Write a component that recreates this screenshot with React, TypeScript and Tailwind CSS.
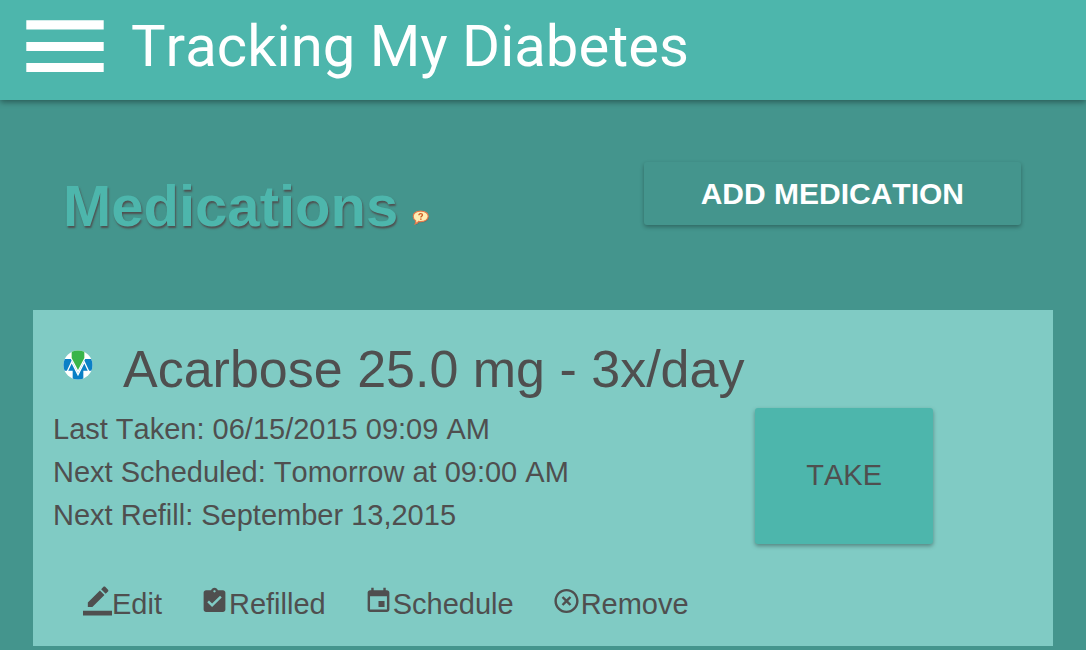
import React from 'react';

interface Medication {
    name: string;
    lastTaken: string;
    nextScheduled: string;
    nextRefill: string;
}

const MEDICATIONS: Medication[] = [
    {
        name: 'Acarbose 25.0 mg - 3x/day',
        lastTaken: '06/15/2015 09:09 AM',
        nextScheduled: 'Tomorrow at 09:00 AM',
        nextRefill: 'September 13,2015',
    },
];

const ACTIONS = [
    {
        label: 'Edit',
        path: 'M17.75 7L14 3.25l-10 10V17h3.75l10-10zm2.96-2.96c.39-.39.39-1.02 0-1.41L18.37.29c-.39-.39-1.02-.39-1.41 0L15 2.25 18.75 6l1.96-1.96zM0 20h24v4H0z',
    },
    {
        label: 'Refilled',
        path: 'M19 3h-4.18C14.4 1.84 13.3 1 12 1c-1.3 0-2.4.84-2.82 2H5c-1.1 0-2 .9-2 2v14c0 1.1.9 2 2 2h14c1.1 0 2-.9 2-2V5c0-1.1-.9-2-2-2zm-7 0c.55 0 1 .45 1 1s-.45 1-1 1-1-.45-1-1 .45-1 1-1zm-2 14l-4-4 1.41-1.41L10 14.17l6.59-6.59L18 9l-8 8z',
    },
    {
        label: 'Schedule',
        path: 'M17 12h-5v5h5v-5zM16 1v2H8V1H6v2H5c-1.11 0-1.99.9-1.99 2L3 19c0 1.1.89 2 2 2h14c1.1 0 2-.9 2-2V5c0-1.1-.9-2-2-2h-1V1h-2zm3 18H5V8h14v11z',
    },
    {
        label: 'Remove',
        path: 'M14.59 8L12 10.59 9.41 8 8 9.41 10.59 12 8 14.59 9.41 16 12 13.41 14.59 16 16 14.59 13.41 12 16 9.41 14.59 8zM12 2C6.47 2 2 6.47 2 12s4.47 10 10 10 10-4.47 10-10S17.53 2 12 2zm0 18c-4.41 0-8-3.59-8-8s3.59-8 8-8 8 3.59 8 8-3.59 8-8 8z',
    },
];

const MenuIcon = () => (
    <svg width={78} height={52} viewBox="0 0 78 52" fill="currentColor">
        <path d="M0.300 0.300h77.400v9.300H0.300zM0.300 22h77.400v9H0.300zM0.300 43h77.400v9H0.300z" />
    </svg>
);

const HelpBubble = () => (
    <svg width={18} height={16} viewBox="0 0 18 16">
        <path
            d="M9.500 2c4.200 0 7.500 2.200 7.500 5.300s-3.300 5.300-7.500 5.300c-.8 0-1.500 0-2.200-.2-.8 1.300-2 2.400-3.600 2.700.7-.9 1-2.300.7-3.400C2.600 10.800 1.700 9.100 1.700 7.300 1.700 4.200 5.300 2 9.500 2z"
            fill="#4f4f4f"
            opacity=".35"
        />
        <path
            d="M8.700 1.100c4.300 0 7.500 2.200 7.500 5.200s-3.200 5.300-7.500 5.300c-.8 0-1.400 0-2.100-.2-.8 1.300-2 2.300-3.500 2.600.7-.9.900-2.200.6-3.300C2.200 9.800 1.200 8.200 1.200 6.300c0-3 3.200-5.200 7.500-5.200z"
            fill="#ffedb3"
            stroke="#e5794a"
            strokeWidth="1.100"
        />
        <path d="M6.900 5.200c0-1.100.8-1.600 1.800-1.600s1.800.5 1.800 1.400c0 1.100-1.700 1.200-1.700 2.600" fill="none" stroke="#cf5a22" strokeWidth="1.300" />
        <rect x="8.100" y="8.500" width="1.500" height="1.300" fill="#cf5a22" />
    </svg>
);

const MedLogo = () => (
    <svg width={30} height={30} viewBox="0 0 90 90" className="shrink-0">
        <clipPath id="logo-circle">
            <circle cx="45" cy="45" r="43.500" />
        </clipPath>
        <g clipPath="url(#logo-circle)">
            <rect width="90" height="90" fill="#fff" />
            <path d="M0 27h90v35H0zM29 60h32v30H29z" fill="#0a80c6" />
            <path d="M22 24h46L45 70z" fill="#fff" />
            <path d="M13 64L26 36 45 74 64 36 77 64" fill="none" stroke="#fff" strokeWidth="4" />
            <path d="M26 0h38v24L45 60 26 24z" fill="#39b54a" />
        </g>
    </svg>
);

const MedicationCard: React.FC<{ medication: Medication }> = ({ medication }) => (
    <article className="bg-[#80cbc4] px-5 pt-[27px] pb-6">
        <h2 className="flex items-center gap-[30px] pl-[10px] text-[52px] leading-[64px]">
            <span className="pb-2"><MedLogo /></span>
            {medication.name}
        </h2>
        <div className="grid grid-cols-[5fr_2fr] gap-x-2 pt-[7px]">
            <div className="leading-[43px]">
                <p>Last Taken: {medication.lastTaken}</p>
                <p>Next Scheduled: {medication.nextScheduled}</p>
                <p>Next Refill: {medication.nextRefill}</p>
            </div>
            <button className="h-[136px] justify-self-start rounded-[3px] bg-[#4db6ac] px-[51px] shadow-[0_2px_4px_rgba(0,0,0,0.35)]">
                TAKE
            </button>
        </div>
        <div className="flex flex-wrap gap-x-[38px] pt-[42px] pl-[30px]">
            {ACTIONS.map((action) => (
                <button key={action.label} className="flex items-start leading-[36px]">
                    <svg width={29} height={30} viewBox="0 0 24 24" fill="currentColor">
                        <path d={action.path} />
                    </svg>
                    {action.label}
                </button>
            ))}
        </div>
    </article>
);

export default function App() {
    return (
        <div className="min-h-screen bg-[#44958d] font-['Liberation_Sans',Arial,sans-serif] text-[29px] text-[#4f4f4f] [font-kerning:none]">
            <header className="relative flex h-[100px] items-center gap-[27px] bg-[#4db6ac] px-[26px] pb-2 text-white shadow-[0_2px_6px_rgba(0,0,0,0.4)]">
                <button aria-label="Menu"><MenuIcon /></button>
                <h1 className="font-[Roboto,sans-serif] text-[58px] leading-[68px]">Tracking My Diabetes</h1>
            </header>

            <main className="px-[33px]">
                <div className="flex items-start justify-between pt-[62px] pr-8 pb-[70px] pl-[30px]">
                    <div className="flex items-center gap-[14px] pt-[9px]">
                        <h2 className="text-[58px] leading-[69px] font-bold text-[#4db6ac] [text-shadow:1px_2px_2px_#4f4f4f]">Medications</h2>
                        <button aria-label="Help" className="pt-6"><HelpBubble /></button>
                    </div>
                    <button className="h-[63px] rounded-[3px] px-[57px] text-[30px] font-bold text-white shadow-[0_2px_4px_rgba(0,0,0,0.3)]">
                        ADD MEDICATION
                    </button>
                </div>

                {MEDICATIONS.map((medication) => (
                    <MedicationCard key={medication.name} medication={medication} />
                ))}
            </main>
        </div>
    );
}
